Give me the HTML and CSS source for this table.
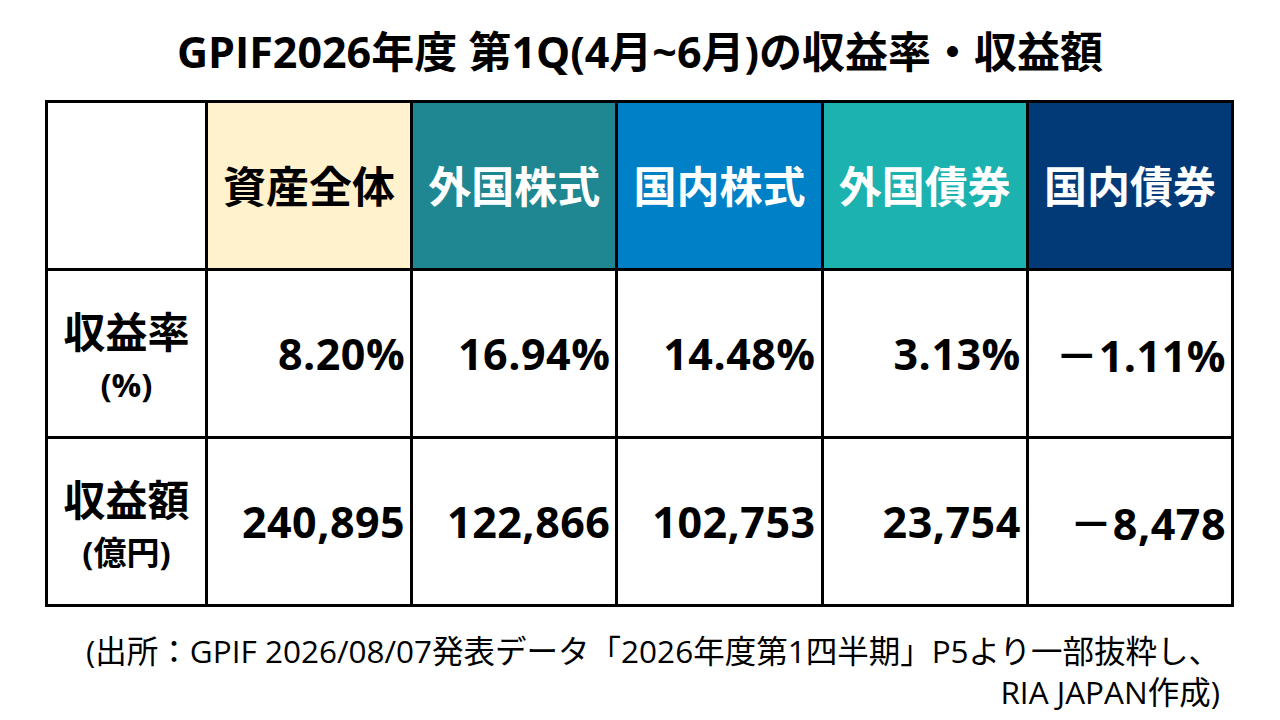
FILE: index.html
```html
<!DOCTYPE html>
<html lang="ja">
<head>
<meta charset="utf-8">
<title>GPIF2026年度 第1Q 収益率・収益額</title>
<link rel="stylesheet" href="styles.css">
</head>
<body>
<div class="page">
  <h1 class="title">GPIF2026年度 第1Q(4月~6月)の収益率・収益額</h1>
  <div class="table">
    <div class="cell blank"></div>
    <div class="cell head total">資産全体</div>
    <div class="cell head fstock">外国株式</div>
    <div class="cell head dstock">国内株式</div>
    <div class="cell head fbond">外国債券</div>
    <div class="cell head dbond">国内債券</div>

    <div class="cell label"><span class="main">収益率</span><span class="unit">(%)</span></div>
    <div class="cell value">8.20%</div>
    <div class="cell value">16.94%</div>
    <div class="cell value">14.48%</div>
    <div class="cell value">3.13%</div>
    <div class="cell value">－1.11%</div>

    <div class="cell label"><span class="main">収益額</span><span class="unit">(億円)</span></div>
    <div class="cell value">240,895</div>
    <div class="cell value">122,866</div>
    <div class="cell value">102,753</div>
    <div class="cell value">23,754</div>
    <div class="cell value">－8,478</div>
  </div>
  <p class="note"><span class="line">(出所：GPIF 2026/08/07発表データ「2026年度第1四半期」P5より一部抜粋し、</span><span class="line">RIA JAPAN作成)</span></p>
</div>
</body>
</html>
```

FILE: styles.css
```css
html, body {
  margin: 0;
  padding: 0;
  background: #ffffff;
}

body {
  font-family: "Open Sans", "Noto Sans CJK JP", sans-serif;
  color: #000000;
}

.page {
  width: 1280px;
  height: 720px;
  display: flex;
  flex-direction: column;
  overflow: hidden;
}

.title {
  margin: 0;
  height: 100px;
  display: flex;
  align-items: center;
  justify-content: center;
  font-size: 43px;
  font-weight: 700;
  letter-spacing: 0;
  padding-bottom: 2px;
  box-sizing: border-box;
}

.table {
  margin-left: 45px;
  width: 1189px;
  height: 507px;
  box-sizing: border-box;
  background: #000000;
  padding: 3px;
  display: grid;
  grid-template-columns: 157px repeat(5, 1fr);
  grid-template-rows: repeat(3, 1fr);
  gap: 3px;
}

.cell {
  background: #ffffff;
  display: flex;
  align-items: center;
  min-width: 0;
  font-weight: 700;
}

.head {
  justify-content: center;
  font-size: 43px;
  color: #ffffff;
  padding-bottom: 2px;
}

.total { background: #fff2cc; color: #000000; }
.fstock { background: #1f8791; }
.dstock { background: #0080c6; }
.fbond { background: #1bb2af; }
.dbond { background: #023a78; }

.label {
  flex-direction: column;
  justify-content: center;
  padding-top: 2px;
}

.label .main {
  font-size: 42px;
  line-height: 60px;
}

.label .unit {
  font-size: 33px;
  line-height: 46px;
}

.value {
  justify-content: flex-end;
  padding-right: 5px;
  font-size: 43px;
  letter-spacing: 0.5px;
}

.note {
  margin: 23px 60px 0 0;
  display: flex;
  flex-direction: column;
  align-items: flex-end;
  font-size: 31.5px;
  line-height: 41px;
  white-space: nowrap;
}

.note .line {
  display: block;
}
```
